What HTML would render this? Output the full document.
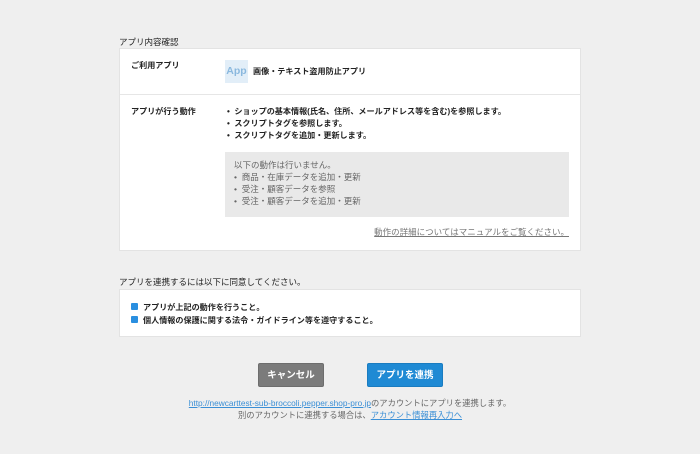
<!DOCTYPE html>
<html><head><meta charset="utf-8"><style>
*{margin:0;padding:0;box-sizing:border-box}
body{width:700px;height:454px;background:#efefef;font-family:"Liberation Sans","Noto Sans CJK JP",sans-serif;font-size:8.5px;color:#222;position:relative;overflow:hidden}
.a{position:absolute;white-space:nowrap;line-height:12px}
.card{position:absolute;background:#fff;border:1px solid #e3e3e3}
.bd{font-weight:bold;font-size:8.1px}
</style></head><body>
<div class="a" style="left:119px;top:36px">アプリ内容確認</div>
<div class="card" style="left:119px;top:48px;width:462px;height:203px"></div>
<div style="position:absolute;left:120px;top:94px;width:460px;height:1px;background:#e6e6e6"></div>
<div class="a bd" style="left:131px;top:60px">ご利用アプリ</div>
<div style="position:absolute;left:225px;top:60px;width:23px;height:23px;background:#e2eef8;color:#8ab8de;font-size:10.5px;font-weight:bold;line-height:23px;text-align:center">App</div>
<div class="a bd" style="left:253px;top:66px">画像・テキスト盗用防止アプリ</div>
<div class="a bd" style="left:131px;top:106px">アプリが行う動作</div>
<div class="a bd" style="left:227px;top:106px">•&nbsp; ショップの基本情報(氏名、住所、メールアドレス等を含む)を参照します。<br>•&nbsp; スクリプトタグを参照します。<br>•&nbsp; スクリプトタグを追加・更新します。</div>
<div style="position:absolute;left:225px;top:152px;width:344px;height:65px;background:#e9e9e9"></div>
<div class="a" style="left:234px;top:159px;color:#666">以下の動作は行いません。<br>•&nbsp; 商品・在庫データを追加・更新<br>•&nbsp; 受注・顧客データを参照<br>•&nbsp; 受注・顧客データを追加・更新</div>
<div class="a" style="right:131px;top:226px;color:#777;text-decoration:underline">動作の詳細についてはマニュアルをご覧ください。</div>
<div class="a" style="left:119px;top:276px">アプリを連携するには以下に同意してください。</div>
<div class="card" style="left:119px;top:289px;width:462px;height:48px"></div>
<div style="position:absolute;left:131px;top:303px;width:7px;height:7px;background:#2a8fe0;border-radius:1px"></div>
<div style="position:absolute;left:131px;top:316px;width:7px;height:7px;background:#2a8fe0;border-radius:1px"></div>
<div class="a bd" style="left:143px;top:301px;line-height:13px">アプリが上記の動作を行うこと。<br>個人情報の保護に関する法令・ガイドライン等を遵守すること。</div>
<div style="position:absolute;left:258px;top:363px;width:66px;height:24px;background:#7b7b7b;border:1px solid #6d6d6d;border-radius:2px;color:#fff;font-weight:bold;font-size:9.5px;line-height:24px;text-align:center">キャンセル</div>
<div style="position:absolute;left:367px;top:363px;width:76px;height:24px;background:#1f8ad4;border:1px solid #1a7cc0;border-radius:2px;color:#fff;font-weight:bold;font-size:9.5px;line-height:24px;text-align:center">アプリを連携</div>
<div class="a" style="left:0;width:700px;text-align:center;top:397px;color:#666;font-size:8.3px"><span style="color:#3a8fd6;text-decoration:underline">http://newcarttest-sub-broccoli.pepper.shop-pro.jp</span>のアカウントにアプリを連携します。<br>別のアカウントに連携する場合は、<span style="color:#3a8fd6;text-decoration:underline">アカウント情報再入力へ</span></div>
</body></html>
